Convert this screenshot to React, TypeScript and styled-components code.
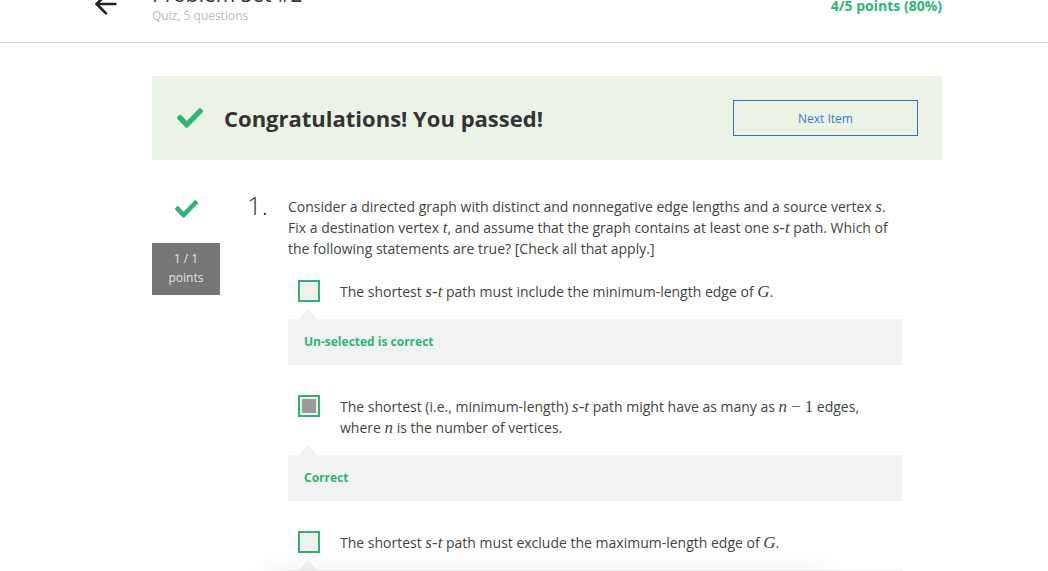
import React from "react";
import styled, { createGlobalStyle } from "styled-components";
import { ArrowLeft } from "lucide-react";

const GREEN = "#2bb673";

const Global = createGlobalStyle`
  html, body { margin: 0; padding: 0; background: #fff; }
  body { font-family: "Open Sans", "Liberation Sans", sans-serif; color: #444; overflow: hidden; }
  * { box-sizing: border-box; }
`;

const Page = styled.div`
  margin-top: -14px;
`;

const Header = styled.header`
  border-bottom: 1px solid #d6d6d6;
  padding-bottom: 18px;
`;

const HeaderInner = styled.div`
  margin-left: 90px;
  width: 852px;
  display: flex;
  align-items: flex-start;
`;

const BackButton = styled.div`
  width: 62px;
  margin-top: 2px;
  color: #222;
  display: flex;
`;

const TitleBlock = styled.div`
  display: flex;
  flex-direction: column;
`;

const Title = styled.h1`
  margin: -3px 0 3px;
  font-size: 21px;
  line-height: 22px;
  font-weight: 400;
  color: #333;
`;

const Subtitle = styled.div`
  font-size: 12px;
  line-height: 16px;
  color: #bbb;
`;

const Score = styled.div`
  margin-left: auto;
  margin-top: 10px;
  font-size: 14px;
  line-height: 20px;
  font-weight: 700;
  color: ${GREEN};
`;

const Main = styled.main`
  margin-left: 152px;
  width: 790px;
  margin-top: 33px;
`;

const Banner = styled.section`
  height: 84px;
  background: #ebf2e6;
  display: flex;
  align-items: center;
  padding: 0 24px 0 25px;
`;

const BannerText = styled.h2`
  margin: 0 0 0 21px;
  font-size: 22px;
  font-weight: 700;
  color: #333;
  line-height: 30px;
`;

const NextButton = styled.button`
  margin-left: auto;
  width: 185px;
  height: 36px;
  background: transparent;
  border: 1px solid #2f72c9;
  color: #3b7bd3;
  font-family: "Open Sans", "Liberation Sans", sans-serif;
  font-size: 12px;
  cursor: pointer;
`;

const Question = styled.section`
  display: flex;
  margin-top: 36px;
`;

const LeftCol = styled.div`
  width: 68px;
  display: flex;
  flex-direction: column;
  align-items: center;
  padding-top: 4px;
`;

const PointsBox = styled.div`
  margin-top: 25px;
  width: 68px;
  height: 52px;
  background: #767676;
  color: #e2e2e2;
  font-size: 12px;
  line-height: 19px;
  padding-top: 6px;
  text-align: center;
`;

const Number = styled.div`
  margin-left: 27px;
  width: 41px;
  font-size: 26px;
  font-weight: 300;
  line-height: 18px;
  color: #333;
`;

const Body = styled.div`
  width: 614px;
`;

const Prompt = styled.p`
  margin: 0;
  font-size: 14px;
  line-height: 21px;
  color: #444;
`;

const Option = styled.div<{ $first?: boolean }>`
  display: flex;
  align-items: flex-start;
  margin-top: ${(p) => (p.$first ? "21px" : "30px")};
  padding-left: 10px;
`;

const Checkbox = styled.span<{ $checked?: boolean }>`
  flex: none;
  width: 22px;
  height: 22px;
  border: 2px solid #2db36f;
  background: #f0f0f0;
  padding: 2px;
  display: flex;
  &::after {
    content: "";
    flex: 1;
    background: ${(p) => (p.$checked ? "#9a9a9a" : "transparent")};
  }
`;

const OptionText = styled.div`
  margin-left: 20px;
  font-size: 14px;
  line-height: 21px;
  color: #444;
  padding-top: 1px;
`;

const Feedback = styled.div`
  position: relative;
  margin-top: 17px;
  background: #f2f2f2;
  padding: 15px 16px;
  font-size: 12px;
  line-height: 16px;
  font-weight: 700;
  color: ${GREEN};
  &::before {
    content: "";
    position: absolute;
    left: 11px;
    top: -10px;
    border-left: 9px solid transparent;
    border-right: 9px solid transparent;
    border-bottom: 10px solid #f2f2f2;
  }
`;

const M = styled.span`
  font-family: "Liberation Serif", "DejaVu Serif", serif;
  font-style: italic;
  font-size: 17px;
  line-height: 14px;
`;

const MR = styled.span`
  font-family: "Liberation Serif", "DejaVu Serif", serif;
  font-size: 17px;
  line-height: 14px;
`;

const MathOp = styled(MR)`
  margin: 0 4px;
`;

const BottomShadow = styled.div`
  position: fixed;
  left: 265px;
  width: 565px;
  bottom: -60px;
  height: 60px;
  background: #fff;
  box-shadow: 0 0 28px rgba(0, 0, 0, 0.07);
`;

const Check = ({ w, h }: { w: number; h: number }) => (
  <svg width={w} height={h} viewBox="0 64 512 384" preserveAspectRatio="none">
    <path
      fill={GREEN}
      d="M173.898 439.404l-166.4-166.4c-9.997-9.997-9.997-26.206 0-36.204l36.203-36.204c9.997-9.998 26.207-9.998 36.204 0L192 312.69 432.095 72.596c9.997-9.997 26.207-9.997 36.204 0l36.203 36.204c9.997 9.997 9.997 26.206 0 36.204l-294.4 294.401c-9.998 9.997-26.207 9.997-36.204-.001z"
    />
  </svg>
);

const ST = () => (
  <>
    <M>s</M>
    <MR>-</MR>
    <M>t</M>
  </>
);

export default function App() {
  return (
    <>
      <Global />
      <Page>
        <Header>
          <HeaderInner>
            <BackButton>
              <ArrowLeft size={32} strokeWidth={2} />
            </BackButton>
            <TitleBlock>
              <Title>Problem Set #2</Title>
              <Subtitle>Quiz, 5 questions</Subtitle>
            </TitleBlock>
            <Score>4/5 points (80%)</Score>
          </HeaderInner>
        </Header>
        <Main>
          <Banner>
            <Check w={26} h={20} />
            <BannerText>Congratulations! You passed!</BannerText>
            <NextButton>Next Item</NextButton>
          </Banner>
          <Question>
            <LeftCol>
              <Check w={23} h={18} />
              <PointsBox>
                1 / 1
                <br />
                points
              </PointsBox>
            </LeftCol>
            <Number>1.</Number>
            <Body>
              <Prompt>
                Consider a directed graph with distinct and nonnegative edge lengths and a source vertex <M>s</M>.
                Fix a destination vertex <M>t</M>, and assume that the graph contains at least one <ST /> path.
                Which of the following statements are true? [Check all that apply.]
              </Prompt>
              <Option $first>
                <Checkbox />
                <OptionText>
                  The shortest <ST /> path must include the minimum-length edge of <M>G</M>.
                </OptionText>
              </Option>
              <Feedback>Un-selected is correct</Feedback>
              <Option>
                <Checkbox $checked />
                <OptionText>
                  The shortest (i.e., minimum-length) <ST /> path might have as many as <M>n</M>
                  <MathOp>−</MathOp>
                  <MR>1</MR> edges, where <M>n</M> is the number of vertices.
                </OptionText>
              </Option>
              <Feedback>Correct</Feedback>
              <Option>
                <Checkbox />
                <OptionText>
                  The shortest <ST /> path must exclude the maximum-length edge of <M>G</M>.
                </OptionText>
              </Option>
              <Feedback>Un-selected is correct</Feedback>
            </Body>
          </Question>
        </Main>
      </Page>
      <BottomShadow />
    </>
  );
}
